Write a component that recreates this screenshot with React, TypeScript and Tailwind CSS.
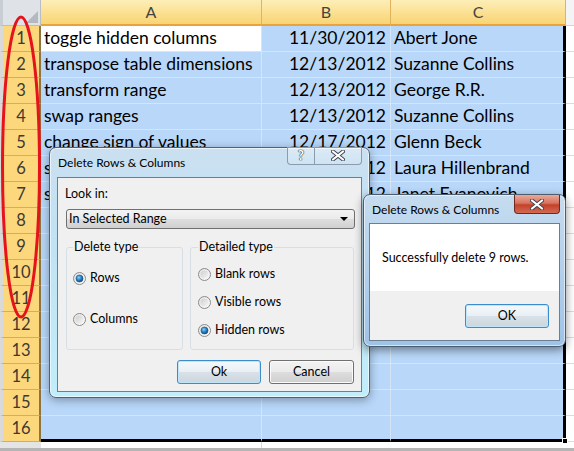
import React from 'react';

const rows: [string, string, string][] = [
  ['toggle hidden columns', '11/30/2012', 'Abert Jone'],
  ['transpose table dimensions', '12/13/2012', 'Suzanne Collins'],
  ['transform range', '12/13/2012', 'George R.R.'],
  ['swap ranges', '12/13/2012', 'Suzanne Collins'],
  ['change sign of values', '12/17/2012', 'Glenn Beck'],
  ['split cells', '12/17/2012', 'Laura Hillenbrand'],
  ['select specific cells', '12/18/2012', 'Janet Evanovich'],
  ['', '', ''],
  ['', '', ''],
  ['', '', ''],
  ['', '', ''],
  ['', '', ''],
  ['', '', ''],
  ['', '', ''],
  ['', '', ''],
  ['', '', ''],
];

function Radio({ checked }: { checked?: boolean }) {
  return (
    <svg width="13" height="13" viewBox="0 0 13 13" className="shrink-0">
      <defs>
        <linearGradient id="rOuter" x1="0" y1="0" x2="1" y2="1">
          <stop offset="0" stopColor="#e4e4e4" />
          <stop offset="1" stopColor="#fbfbfb" />
        </linearGradient>
        <linearGradient id="rInner" x1="0" y1="0" x2="1" y2="1">
          <stop offset="0" stopColor="#cfcfcf" />
          <stop offset="1" stopColor="#f6f6f6" />
        </linearGradient>
        <radialGradient id="rDot" cx="0.4" cy="0.35" r="0.7">
          <stop offset="0" stopColor="#8fd0f5" />
          <stop offset="0.5" stopColor="#2a86c8" />
          <stop offset="1" stopColor="#0d3f6e" />
        </radialGradient>
      </defs>
      <circle cx="6.5" cy="6.5" r="6" fill="url(#rOuter)" stroke="#8a8a8a" strokeWidth="1" />
      <circle cx="6.5" cy="6.5" r="4" fill="url(#rInner)" />
      {checked && <circle cx="6.5" cy="6.5" r="3.5" fill="url(#rDot)" stroke="#19507f" strokeWidth="0.6" />}
    </svg>
  );
}

function CloseGlyph() {
  return (
    <svg width="14" height="11" viewBox="0 0 14 11">
      <path d="M2 1.5 L12 9.5 M12 1.5 L2 9.5" stroke="#3c4650" strokeWidth="4" strokeLinecap="round" />
      <path d="M2 1.5 L12 9.5 M12 1.5 L2 9.5" stroke="#ffffff" strokeWidth="2.2" strokeLinecap="round" />
    </svg>
  );
}

function WinButton({ label, primary, className }: { label: string; primary?: boolean; className: string }) {
  return (
    <div
      className={`${className} flex items-center justify-center rounded-[3px] border text-[12.5px] text-black ${
        primary
          ? 'border-[#3c8ccb] bg-[linear-gradient(180deg,#f4f8fb_0%,#e9f0f5_48%,#d8e1e7_52%,#ccd6dd_100%)] shadow-[inset_0_0_0_1px_#bfe6fb]'
          : 'border-[#707070] bg-[linear-gradient(180deg,#f3f3f3_0%,#ebebeb_48%,#dddddd_52%,#cfcfcf_100%)] shadow-[inset_0_0_0_1px_#fbfbfb]'
      }`}
    >
      {label}
    </div>
  );
}

export default function App() {
  return (
    <div className="relative w-[574px] h-[451px] overflow-hidden bg-white font-['Lato','Open_Sans',sans-serif]">
      {/* sheet */}
      <div className="flex flex-col">
        <div className="flex h-[26px] text-[16px] text-[#444]">
          <div className="relative w-[41px] border-l-[3px] border-[#c9ced4] bg-[#dfe3e8] border-b border-b-[#b9bec4] border-r border-r-[#b9bec4]">
            <div className="absolute right-[2px] bottom-[2px] w-0 h-0 border-l-[12px] border-l-transparent border-b-[12px] border-b-[#b4b9bf]" />
          </div>
          {['A', 'B', 'C'].map((c, i) => (
            <div
              key={c}
              className={`${i === 0 ? 'w-[221px]' : i === 1 ? 'w-[129px]' : 'w-[175px]'} flex items-center justify-center border-r border-r-[#e2b35c] border-b-2 border-b-[#eaa23a] bg-[linear-gradient(180deg,#fdeeb8_0%,#fbe194_50%,#f8d476_100%)]`}
            >
              {c}
            </div>
          ))}
          <div className="flex-1 bg-[#f4f4f4] border-b border-[#d5d5d5]" />
        </div>
        {rows.map((r, i) => {
          const last = i === rows.length - 1;
          const bottom = last ? 'border-b-[3px] border-b-black' : 'border-b border-b-[#d4e5f7]';
          return (
            <div key={i} className="flex h-[26px] text-[17.5px] text-black">
              <div className="w-[41px] flex items-center justify-center border-l-[3px] border-l-[#d9d9d9] border-r-2 border-r-[#8f7442] border-b border-b-[#d7ae56] bg-[#fcd77c] text-[16.5px] text-[#3d3a33]">
                {i + 1}
              </div>
              <div
                className={`w-[221px] flex items-center pl-[3px] border-r border-r-[#d4e5f7] ${bottom} ${
                  i === 0 ? 'bg-white' : 'bg-[#b8d7f9]'
                }`}
              >
                <span className="whitespace-nowrap">{r[0]}</span>
              </div>
              <div className={`w-[129px] flex items-center justify-end pr-[4px] border-r border-r-[#d4e5f7] bg-[#b8d7f9] ${bottom}`}>
                {r[1]}
              </div>
              <div className={`w-[175px] flex items-center pl-[3px] border-r-[3px] border-r-black bg-[#b8d7f9] ${bottom}`}>
                <span className="whitespace-nowrap">{r[2]}</span>
              </div>
              <div className="flex-1 bg-white border-b border-[#dadcdd]" />
            </div>
          );
        })}
        <div className="flex h-[6px]">
          <div className="w-[41px] bg-[#e4e4e4]" />
          <div className="w-[221px] border-r border-[#dadcdd]" />
          <div className="flex-1" />
        </div>
        <div className="h-[3px] bg-[#b5b5b5]" />
      </div>

      {/* fill handle */}
      <div className="absolute left-[562px] top-[438px] w-[6px] h-[6px] bg-black border border-white" />

      {/* red ellipse around row numbers */}
      <svg className="absolute left-0 top-0" width="60" height="330" viewBox="0 0 60 330">
        <ellipse cx="21" cy="167" rx="18.5" ry="150" fill="none" stroke="#e5131b" strokeWidth="3" />
      </svg>

      {/* Delete Rows & Columns dialog */}
      <div className="absolute left-[49px] top-[147px] w-[321px] h-[251px] flex flex-col rounded-[7px] border border-[#4f6272] bg-[linear-gradient(180deg,#cbe0f1_0%,#c0e2f4_35%,#c0eefa_100%)] shadow-[0_2px_10px_rgba(0,0,0,0.35),inset_0_0_0_1px_rgba(255,255,255,0.6)] px-[7px] pb-[5px]">
        <div className="flex h-[29px] shrink-0">
          <span className="self-center pl-[1px] pt-[1px] text-[12px] text-black">Delete Rows &amp; Columns</span>
          <div className="ml-auto flex h-[18px] -mt-px">
            <div className="w-[28px] flex items-center justify-center rounded-bl-[4px] border border-t-0 border-[#8a9cad] bg-[linear-gradient(180deg,rgba(255,255,255,0.35),rgba(255,255,255,0.1))] text-[13px] font-bold text-white [text-shadow:0_0_1px_#333,0_0_1px_#333,0_0_1px_#333]">
              ?
            </div>
            <div className="w-[47px] flex items-center justify-center rounded-br-[4px] border border-t-0 border-l-0 border-[#8a9cad] bg-[linear-gradient(180deg,rgba(255,255,255,0.35),rgba(255,255,255,0.1))]">
              <CloseGlyph />
            </div>
          </div>
        </div>
        <div className="flex-1 flex flex-col border border-[#6b7f8f] bg-[#f0f0f0] pl-[7px] pr-[6px] pt-[8px] text-[12.5px] text-black">
          <div className="h-[16px] leading-[16px]">Look in:</div>
          <div className="mt-[7px] ml-[1px] h-[20px] flex items-center rounded-[3px] border border-[#707070] bg-[linear-gradient(180deg,#f3f3f3_0%,#ebebeb_48%,#dddddd_52%,#d0d0d0_100%)] pl-[2px] pr-[6px]">
            <span>In Selected Range</span>
            <div className="ml-auto w-0 h-0 border-l-[4px] border-r-[4px] border-t-[4px] border-l-transparent border-r-transparent border-t-black" />
          </div>
          <div className="mt-[10px] ml-[1px] flex gap-[7px] h-[111px]">
            <fieldset className="w-[117px] rounded-[3px] border border-[#d5dfe5] pl-[6px]">
              <legend className="px-[1px] leading-[16px]">Delete type</legend>
              <div className="mt-[15px] flex items-center gap-[4px] h-[16px]">
                <Radio checked />
                <span>Rows</span>
              </div>
              <div className="mt-[25px] flex items-center gap-[4px] h-[16px]">
                <Radio />
                <span>Columns</span>
              </div>
            </fieldset>
            <fieldset className="w-[164px] rounded-[3px] border border-[#d5dfe5] pl-[7px]">
              <legend className="px-[1px] leading-[16px]">Detailed type</legend>
              <div className="mt-[11px] flex items-center gap-[4px] h-[16px]">
                <Radio />
                <span>Blank rows</span>
              </div>
              <div className="mt-[12px] flex items-center gap-[4px] h-[16px]">
                <Radio />
                <span>Visible rows</span>
              </div>
              <div className="mt-[12px] flex items-center gap-[4px] h-[16px]">
                <Radio checked />
                <span>Hidden rows</span>
              </div>
            </fieldset>
          </div>
          <div className="mt-[10px] flex justify-end gap-[8px] pr-[1px]">
            <WinButton label="Ok" primary className="w-[84px] h-[24px]" />
            <WinButton label="Cancel" className="w-[85px] h-[24px]" />
          </div>
        </div>
      </div>

      {/* message box */}
      <div className="absolute left-[363px] top-[194px] w-[203px] h-[153px] flex flex-col rounded-[7px] border border-[#4c5d6d] bg-[linear-gradient(180deg,#c6dcef_0%,#b3d0ec_50%,#9ec3e8_100%)] shadow-[0_3px_10px_rgba(0,0,0,0.45),inset_0_0_0_1px_rgba(255,255,255,0.55)] px-[5px] pb-[5px]">
        <div className="flex h-[28px] shrink-0">
          <span className="self-center pl-[3px] pt-[1px] text-[12px] text-black">Delete Rows &amp; Columns</span>
          <div className="ml-auto w-[46px] h-[19px] flex items-center justify-center rounded-b-[4px] border border-t-0 border-[#6e2a22] bg-[linear-gradient(180deg,#e9a99b_0%,#d9735f_45%,#c4412b_55%,#d26a52_100%)]">
            <CloseGlyph />
          </div>
        </div>
        <div className="flex-1 flex flex-col border border-[#6b7f8f] text-[12.5px] text-black">
          <div className="h-[67px] bg-white pl-[12px] pt-[26px] leading-[16px]">Successfully delete 9 rows.</div>
          <div className="flex-1 bg-[#f0f0f0] flex justify-end items-start pt-[13px] pr-[10px]">
            <WinButton label="OK" primary className="w-[84px] h-[24px]" />
          </div>
        </div>
      </div>
    </div>
  );
}
